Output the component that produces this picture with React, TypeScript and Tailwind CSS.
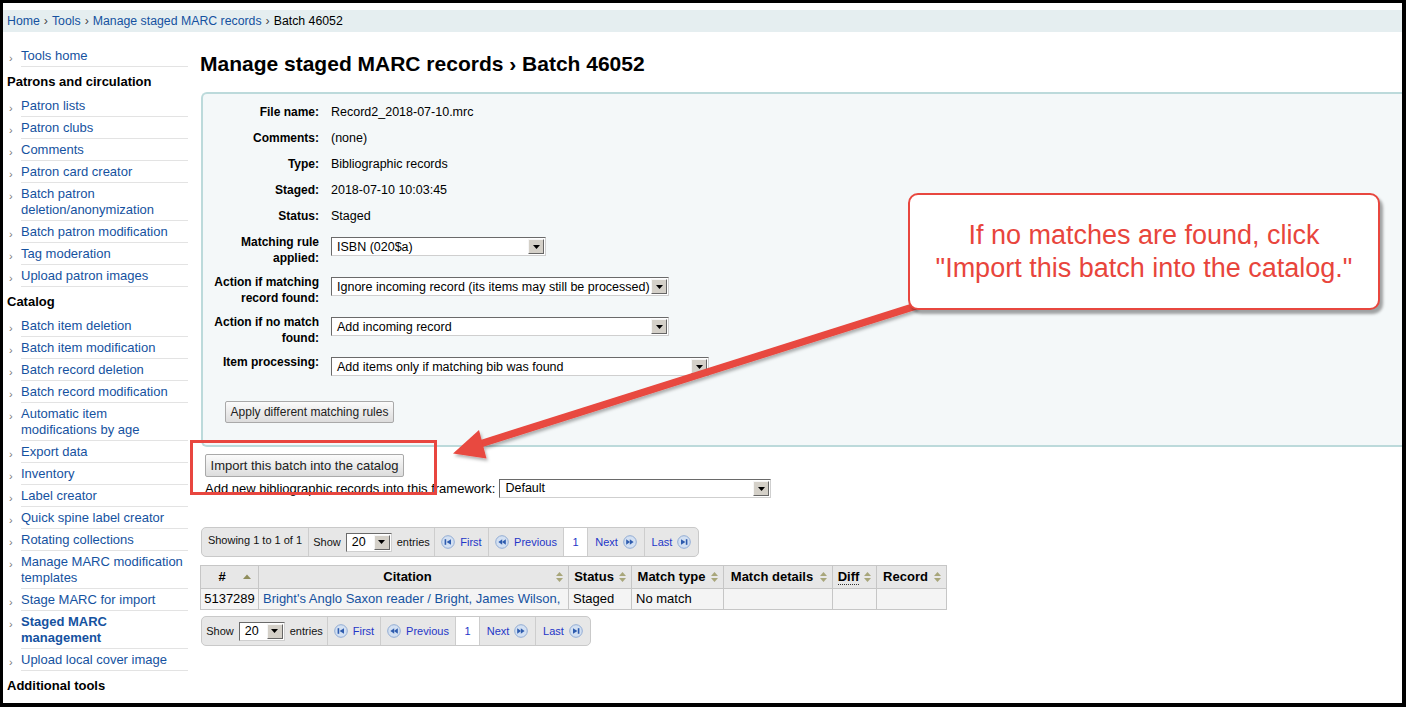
import React from "react";

const LINK = "text-[#1552a0]";

function Select({ text, className }: { text: string; className: string }) {
  return (
    <div
      className={`flex items-stretch bg-white border border-t-[#6a6a6a] border-l-[#6a6a6a] border-r-[#cfcfcf] border-b-[#cfcfcf] ${className}`}
    >
      <div className="flex-1 min-w-0 flex items-center pl-[5px] whitespace-nowrap overflow-hidden text-[12.5px] text-black">
        {text}
      </div>
      <div className="w-[16px] m-[1px] bg-[#d4d0c8] border border-t-[#f6f6f6] border-l-[#f6f6f6] border-r-[#666] border-b-[#666] flex items-center justify-center">
        <svg width="7" height="4" viewBox="0 0 7 4">
          <path d="M0 0h7L3.5 4z" fill="#000" />
        </svg>
      </div>
    </div>
  );
}

function Btn({ children, className }: { children: React.ReactNode; className: string }) {
  return (
    <div
      className={`flex items-center justify-center text-[#222] border border-[#a9a9a9] rounded-[2px] bg-[linear-gradient(#fbfbfb,#dcdcdc)] ${className}`}
    >
      {children}
    </div>
  );
}

function PagIcon({ kind }: { kind: "first" | "prev" | "next" | "last" }) {
  return (
    <svg width="14" height="14" viewBox="0 0 14 14" className="shrink-0">
      <circle cx="7" cy="7" r="6.3" fill="#d3e0f2" stroke="#92acd4" strokeWidth="1" />
      {kind === "first" && (
        <g fill="#2f5cae">
          <rect x="3.6" y="4.2" width="1.6" height="5.6" />
          <path d="M10 4.2v5.6L5.6 7z" />
        </g>
      )}
      {kind === "prev" && (
        <g fill="#2f5cae">
          <path d="M7.2 4.3v5.4L3.4 7z" />
          <path d="M10.8 4.3v5.4L7 7z" />
        </g>
      )}
      {kind === "next" && (
        <g fill="#2f5cae">
          <path d="M3.2 4.3v5.4L7 7z" />
          <path d="M6.8 4.3v5.4L10.6 7z" />
        </g>
      )}
      {kind === "last" && (
        <g fill="#2f5cae">
          <path d="M4 4.2v5.6L8.4 7z" />
          <rect x="8.8" y="4.2" width="1.6" height="5.6" />
        </g>
      )}
    </svg>
  );
}

function SortIcon({ up }: { up?: boolean }) {
  if (up)
    return (
      <svg width="8" height="6" viewBox="0 0 8 6" className="shrink-0">
        <path d="M0 5L4 0.5L8 5z" fill="#8f8d5c" />
      </svg>
    );
  return (
    <svg width="7" height="10" viewBox="0 0 7 10" className="shrink-0">
      <path d="M0 4L3.5 0L7 4z" fill="#a8a67a" />
      <path d="M0 6L7 6L3.5 10z" fill="#a8a67a" />
    </svg>
  );
}

const PLINK = "text-[#2436c8]";

function Pager({ showing }: { showing: boolean }) {
  const cell = "flex items-center justify-center gap-[5px] border-r border-[#cdcdcd] h-full";
  return (
    <div
      className={`flex items-stretch h-[30px] bg-[#e7e7e7] border border-[#c9c9c9] rounded-[5px] text-[11px] ml-[1px] ${
        showing ? "w-[498px]" : "w-[390px]"
      }`}
    >
      {showing && (
        <div className={`${cell} w-[107px] pb-[3px] text-[#111]`}>Showing 1 to 1 of 1</div>
      )}
      <div className={`${cell} w-[126px] gap-[4px] text-[#111]`}>
        <span>Show</span>
        <Select text="20" className="w-[46px] h-[19px]" />
        <span>entries</span>
      </div>
      <div className={`${cell} ${showing ? "w-[54px]" : "w-[53px]"} ${PLINK}`}>
        <PagIcon kind="first" />
        <span>First</span>
      </div>
      <div className={`${cell} w-[75px] ${PLINK}`}>
        <PagIcon kind="prev" />
        <span>Previous</span>
      </div>
      <div className={`${cell} w-[24px] bg-white ${PLINK}`}>1</div>
      <div className={`${cell} ${showing ? "w-[57px]" : "w-[56px]"} ${PLINK}`}>
        <span>Next</span>
        <PagIcon kind="next" />
      </div>
      <div className={`flex items-center justify-center gap-[5px] h-full flex-1 ${PLINK}`}>
        <span>Last</span>
        <PagIcon kind="last" />
      </div>
    </div>
  );
}

type SideEntry = { h?: string; t?: string; bold?: boolean };

const side: SideEntry[] = [
  { t: "Tools home" },
  { h: "Patrons and circulation" },
  { t: "Patron lists" },
  { t: "Patron clubs" },
  { t: "Comments" },
  { t: "Patron card creator" },
  { t: "Batch patron deletion/anonymization" },
  { t: "Batch patron modification" },
  { t: "Tag moderation" },
  { t: "Upload patron images" },
  { h: "Catalog" },
  { t: "Batch item deletion" },
  { t: "Batch item modification" },
  { t: "Batch record deletion" },
  { t: "Batch record modification" },
  { t: "Automatic item modifications by age" },
  { t: "Export data" },
  { t: "Inventory" },
  { t: "Label creator" },
  { t: "Quick spine label creator" },
  { t: "Rotating collections" },
  { t: "Manage MARC modification templates" },
  { t: "Stage MARC for import" },
  { t: "Staged MARC management", bold: true },
  { t: "Upload local cover image" },
  { h: "Additional tools" },
  { t: "Calendar" },
];

function InfoRow({ label, value }: { label: string; value: string }) {
  return (
    <div className="flex py-[5px] leading-[16px] text-[12px]">
      <div className="w-[116px] text-right font-bold shrink-0">{label}</div>
      <div className="ml-[12px] text-[12.5px]">{value}</div>
    </div>
  );
}

function SelRow({ label, children }: { label: React.ReactNode; children: React.ReactNode }) {
  return (
    <div className="flex items-start pt-[5px] pb-[3px] leading-[16px] text-[12px]">
      <div className="w-[116px] text-right font-bold shrink-0">{label}</div>
      <div className="ml-[12px] mt-[3px]">{children}</div>
    </div>
  );
}

export default function App() {
  return (
    <div className="relative w-[1406px] h-[707px] bg-black pt-[3px] pl-[3px] pr-[4px] pb-[4px] font-['Liberation_Sans',Arial,sans-serif] text-black">
      <div className="w-full h-full bg-white overflow-hidden flex flex-col">
        {/* breadcrumb */}
        <div className="mt-[7px] h-[22px] shrink-0 bg-[#e5eef0] flex items-center pl-[4px] text-[12.3px]">
          <span className={LINK}>Home</span>
          <span className="text-[#444] mx-[4px]">›</span>
          <span className={LINK}>Tools</span>
          <span className="text-[#444] mx-[4px]">›</span>
          <span className={LINK}>Manage staged MARC records</span>
          <span className="text-[#444] mx-[4px]">›</span>
          <span>Batch 46052</span>
        </div>

        <div className="flex flex-1 min-h-0">
          {/* sidebar */}
          <aside className="w-[183px] ml-[4px] mt-[13px] shrink-0">
            {side.map((e, i) =>
              e.h ? (
                <div key={i} className="pt-[7px] pb-[5px] leading-[16px] text-[13px] font-bold">
                  {e.h}
                </div>
              ) : (
                <div key={i} className="flex">
                  <span className="w-[14px] shrink-0 pl-[2px] text-[11px] text-[#777] leading-[16px] pt-[5px]">
                    ›
                  </span>
                  <div
                    className={`w-[167px] border-b border-[#e3e3e3] pt-[3px] pb-[2px] pr-[2px] leading-[16px] text-[13px] ${LINK} ${
                      e.bold ? "font-bold" : ""
                    }`}
                  >
                    {e.t}
                  </div>
                </div>
              )
            )}
          </aside>

          {/* main */}
          <main className="flex-1 min-w-0 ml-[10px]">
            <h1 className="mt-[20px] leading-[24px] text-[21px] font-bold whitespace-nowrap">
              Manage staged MARC records › Batch 46052
            </h1>

            <div className="mt-[16px] ml-[1px] border-2 border-r-0 border-[#bcdadb] rounded-l-[6px] bg-[#f4f8f9] pt-[5px] pb-[22px]">
              <InfoRow label="File name:" value="Record2_2018-07-10.mrc" />
              <InfoRow label="Comments:" value="(none)" />
              <InfoRow label="Type:" value="Bibliographic records" />
              <InfoRow label="Staged:" value="2018-07-10 10:03:45" />
              <InfoRow label="Status:" value="Staged" />
              <SelRow label="Matching rule applied:">
                <Select text="ISBN (020$a)" className="w-[215px] h-[19px]" />
              </SelRow>
              <SelRow label="Action if matching record found:">
                <Select
                  text="Ignore incoming record (its items may still be processed)"
                  className="w-[338px] h-[19px]"
                />
              </SelRow>
              <SelRow label="Action if no match found:">
                <Select text="Add incoming record" className="w-[338px] h-[19px]" />
              </SelRow>
              <SelRow label="Item processing:">
                <Select text="Add items only if matching bib was found" className="w-[378px] h-[19px]" />
              </SelRow>
              <Btn className="mt-[22px] ml-[22px] w-[169px] h-[22px] text-[12px]">
                Apply different matching rules
              </Btn>
            </div>

            <Btn className="mt-[7px] ml-[5px] w-[199px] h-[23px] text-[13px]">
              Import this batch into the catalog
            </Btn>
            <div className="mt-[2px] ml-[5px] flex items-center h-[19px] text-[13px]">
              <span>Add new bibliographic records into this framework:</span>
              <Select text="Default" className="ml-[4px] w-[272px] h-[19px]" />
            </div>

            <div className="mt-[29px]">
              <Pager showing />
            </div>

            <table className="mt-[8px] border-collapse text-[13px] w-[746px] table-fixed">
              <colgroup>
                <col className="w-[58px]" />
                <col className="w-[310px]" />
                <col className="w-[63px]" />
                <col className="w-[92px]" />
                <col className="w-[109px]" />
                <col className="w-[44px]" />
                <col className="w-[70px]" />
              </colgroup>
              <thead>
                <tr className="h-[23px] bg-[#e7e7e7]">
                  {[
                    ["#", true],
                    ["Citation", false],
                    ["Status", false],
                    ["Match type", false],
                    ["Match details", false],
                    ["Diff", false],
                    ["Record", false],
                  ].map(([t, up], i) => (
                    <th key={i} className="border border-[#c6c6c6] p-0 font-bold">
                      <div className="flex items-center pl-[4px] pr-[5px]">
                        <span className="flex-1 text-center whitespace-nowrap">
                          {t === "Diff" ? (
                            <span className="border-b border-dotted border-[#333]">Diff</span>
                          ) : (
                            (t as string)
                          )}
                        </span>
                        <span className={up ? "ml-[4px] mr-[2px]" : "ml-[4px]"}>
                          <SortIcon up={up as boolean} />
                        </span>
                      </div>
                    </th>
                  ))}
                </tr>
              </thead>
              <tbody>
                <tr className="h-[21px] bg-[#f4f4f4]">
                  <td className="border border-[#c6c6c6] px-[2px] text-center">5137289</td>
                  <td className={`border border-[#c6c6c6] pl-[4px] whitespace-nowrap overflow-hidden ${LINK}`}>
                    Bright's Anglo Saxon reader / Bright, James Wilson,
                  </td>
                  <td className="border border-[#c6c6c6] pl-[4px]">Staged</td>
                  <td className="border border-[#c6c6c6] pl-[4px]">No match</td>
                  <td className="border border-[#c6c6c6]"></td>
                  <td className="border border-[#c6c6c6]"></td>
                  <td className="border border-[#c6c6c6]"></td>
                </tr>
              </tbody>
            </table>

            <div className="mt-[6px]">
              <Pager showing={false} />
            </div>
          </main>
        </div>
      </div>

      {/* annotations */}
      <svg
        className="absolute left-0 top-0 pointer-events-none"
        width="1406"
        height="707"
        viewBox="0 0 1406 707"
      >
        <defs>
          <filter id="sh" x="-10%" y="-10%" width="120%" height="130%">
            <feDropShadow dx="1.5" dy="2.5" stdDeviation="1.5" floodColor="#000" floodOpacity="0.3" />
          </filter>
        </defs>
        <g filter="url(#sh)" fill="#e8483f">
          <path d="M915 302.5 L917 309.5 L481 447.5 L479 440.5 Z" />
          <path d="M453 453.5 L479 430 L486.5 458.5 Z" />
        </g>
      </svg>

      <div className="absolute left-[190px] top-[440px] w-[247px] h-[55px] border-[3px] border-[#e8463f]" />

      <div className="absolute left-[908px] top-[193px] w-[472px] h-[117px] bg-white border-2 border-[#e8473f] rounded-[10px] shadow-[3px_4px_3px_rgba(0,0,0,0.35)] flex flex-col items-center justify-center text-[27px] leading-[33px] text-[#e8453c]">
        <div>If no matches are found, click</div>
        <div>"Import this batch into the catalog."</div>
      </div>
    </div>
  );
}
